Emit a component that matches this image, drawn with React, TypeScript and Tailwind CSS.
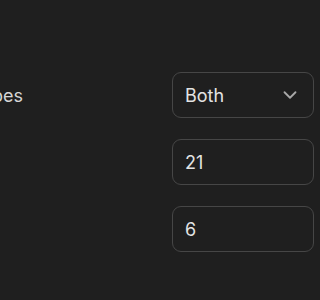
import React from "react";
import { ChevronDown } from "lucide-react";

export default function App() {
  const font = { fontFamily: "Inter, 'Noto Sans', sans-serif" };
  return (
    <div
      className="w-full h-[300px] overflow-hidden bg-[#1f1f1f] pt-[72px] text-[18px] text-[#e3e3e3]"
      style={font}
    >
      <div className="flex flex-col gap-[21px]">
        <div className="flex items-center">
          <div className="w-[172px] shrink-0">
            <div className="w-[23px] flex justify-end whitespace-nowrap text-[#d6d6d6]">
              Chart types
            </div>
          </div>
          <div className="w-[142px] shrink-0 h-[46px] rounded-[9px] border-[1.5px] border-[#464646] flex items-center justify-between pl-[12px] pr-[12px]">
            <span>Both</span>
            <ChevronDown size={22} strokeWidth={2} color="#a8a8a8" />
          </div>
        </div>
        <div className="flex items-center">
          <div className="w-[172px] shrink-0" />
          <div className="w-[142px] shrink-0 h-[46px] rounded-[9px] border-[1.5px] border-[#464646] flex items-center pl-[12px]">
            <span>21</span>
          </div>
        </div>
        <div className="flex items-center">
          <div className="w-[172px] shrink-0" />
          <div className="w-[142px] shrink-0 h-[46px] rounded-[9px] border-[1.5px] border-[#464646] flex items-center pl-[12px]">
            <span>6</span>
          </div>
        </div>
      </div>
    </div>
  );
}
